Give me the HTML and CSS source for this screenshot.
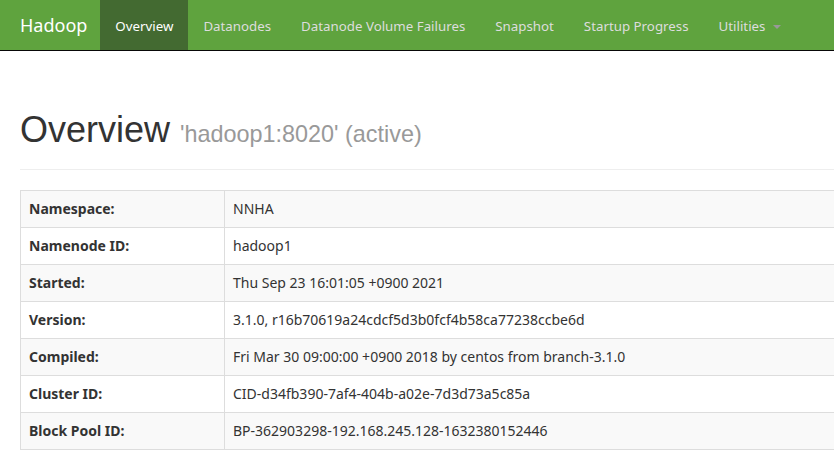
FILE: index.html
```html
<!DOCTYPE html>
<html>
<head>
<meta charset="utf-8">
<link rel="stylesheet" href="styles.css">
</head>
<body>
<nav class="navbar">
  <a class="brand">Hadoop</a>
  <ul class="nav">
    <li class="active"><a>Overview</a></li>
    <li><a>Datanodes</a></li>
    <li><a>Datanode Volume Failures</a></li>
    <li><a>Snapshot</a></li>
    <li><a>Startup Progress</a></li>
    <li><a>Utilities <span class="caret"></span></a></li>
  </ul>
</nav>
<div class="container">
  <div class="page-header">
    <h1>Overview <small>'hadoop1:8020' (active)</small></h1>
  </div>
  <table class="table">
    <tr><th>Namespace:</th><td>NNHA</td></tr>
    <tr><th>Namenode ID:</th><td>hadoop1</td></tr>
    <tr><th>Started:</th><td>Thu Sep 23 16:01:05 +0900 2021</td></tr>
    <tr><th>Version:</th><td>3.1.0, r16b70619a24cdcf5d3b0fcf4b58ca77238ccbe6d</td></tr>
    <tr><th>Compiled:</th><td>Fri Mar 30 09:00:00 +0900 2018 by centos from branch-3.1.0</td></tr>
    <tr><th>Cluster ID:</th><td>CID-d34fb390-7af4-404b-a02e-7d3d73a5c85a</td></tr>
    <tr><th>Block Pool ID:</th><td>BP-362903298-192.168.245.128-1632380152446</td></tr>
  </table>
</div>
</body>
</html>
```
FILE: styles.css
```css
html, body {
  margin: 0;
  padding: 0;
  background: #fff;
  overflow: hidden;
}
body {
  font-family: "Noto Sans", "Noto Sans CJK KR", sans-serif;
  font-size: 14px;
  color: #333;
  width: 1000px;
}
.navbar {
  display: flex;
  align-items: stretch;
  height: 50px;
  background: #5fa33e;
  border-bottom: 1px solid #080808;
  box-sizing: content-box;
  padding-left: 5px;
}
.brand {
  padding: 15px 13px 15px 15px;
  line-height: 20px;
  font-size: 18px;
  color: #fff;
}
.nav {
  list-style: none;
  margin: 0;
  padding: 0;
  display: flex;
}
.nav li a {
  display: block;
  padding: 16px 15px 14px;
  line-height: 20px;
  color: #ddd;
  font-size: 13.3px;
}
.nav li.active a {
  background: #436a31;
  color: #fff;
}
.caret {
  display: inline-block;
  width: 0;
  height: 0;
  margin-left: 4px;
  vertical-align: middle;
  border-top: 4px solid #999;
  border-left: 4px solid transparent;
  border-right: 4px solid transparent;
}
.container {
  padding: 19px 20px 0;
}
.page-header {
  margin: 40px 0 20px;
  padding-bottom: 9px;
  border-bottom: 1px solid #eee;
}
h1 {
  margin: 20px 0 10px;
  font-family: "Liberation Sans", Arial, sans-serif;
  font-size: 36px;
  font-weight: 500;
  line-height: 1.1;
  color: #333;
}
h1 small {
  font-size: 65%;
  color: #999;
  font-weight: normal;
}
.table {
  border-collapse: collapse;
  width: 900px;
}
.table th, .table td {
  border: 1px solid #ddd;
  padding: 8px;
  line-height: 20px;
  text-align: left;
  vertical-align: top;
}
.table th {
  width: 187px;
  font-weight: bold;
}
.table tr:nth-child(odd) {
  background: #f9f9f9;
}
```
